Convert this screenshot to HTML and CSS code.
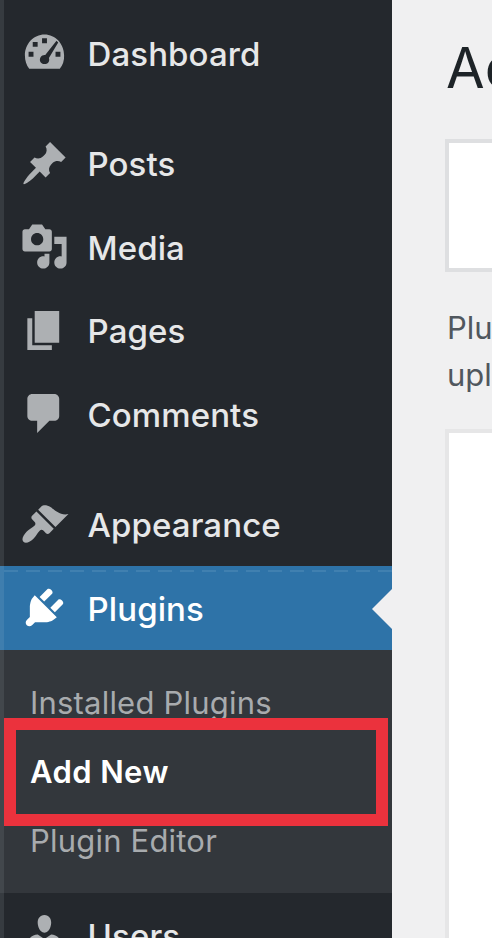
FILE: index.html
```html
<!DOCTYPE html>
<html lang="en">
<head>
<meta charset="utf-8">
<title>Add Plugins</title>
<link rel="stylesheet" href="styles.css">
</head>
<body>
<div class="admin">
  <nav class="sidebar">
    <a class="item"><svg class="icon" viewBox="0 0 20 20"><path fill-rule="evenodd" d="M3.76 16.6h12.48A8 8 0 0 0 18 11.2C18 6.5 14.42 2.7 10 2.7S2 6.5 2 11.2c0 2 .66 4 1.76 5.400zM9 4.200h2v2H9zM5.200 5.700h2v2h-2zM14.900 5.200l.7.7-3.800 6.300c.5 1.500-.5 2.500-1.800 2.500-1.500 0-2.400-1.500-1.600-2.800.4-.7 1.200-1 1.900-.9zM3.500 9.700h2v2h-2zM14.500 9.700h2v2h-2z"/></svg><span class="label">Dashboard</span></a>
    <div class="separator"></div>
    <a class="item"><svg class="icon" viewBox="0 0 20 20"><path d="M10.440 3.020l1.820-1.820 6.360 6.350-1.830 1.820c-1.050-.68-2.480-.57-3.410.36l-.75.75c-.92.93-1.040 2.350-.35 3.410l-1.830 1.820-2.410-2.410-2.800 2.790c-.42.42-3.380 2.710-3.800 2.290s1.860-3.390 2.280-3.810l2.790-2.790L4.100 9.360l1.830-1.820c1.050.69 2.480.57 3.400-.36l.75-.75c.93-.92 1.050-2.350.36-3.410z"/></svg><span class="label">Posts</span></a>
    <a class="item"><svg class="icon" viewBox="0 0 20 20"><path d="M13 11V4c0-.55-.45-1-1-1h-1.670L9 1H5L3.670 3H2c-.55 0-1 .45-1 1v7c0 .55.45 1 1 1h10c.55 0 1-.45 1-1zM7 4.500c1.380 0 2.500 1.120 2.500 2.500S8.380 9.500 7 9.500 4.500 8.380 4.500 7 5.620 4.500 7 4.500zM14 6h5v10.500c0 1.380-1.120 2.500-2.500 2.500S14 17.880 14 16.500s1.120-2.500 2.500-2.500c.17 0 .34.02.5.05V9h-3V6zm-4 8.050V13h2v3.500c0 1.380-1.120 2.500-2.500 2.500S7 17.880 7 16.500 8.120 14 9.500 14c.17 0 .34.02.5.05z"/></svg><span class="label">Media</span></a>
    <a class="item"><svg class="icon" viewBox="0 0 20 20"><path d="M6 15V2h10v13H6zm-1 1h8v2H3V5h2v11z"/></svg><span class="label">Pages</span></a>
    <a class="item"><svg class="icon" viewBox="0 0 20 20"><path d="M5 2h9c1.100 0 2 .9 2 2v7c0 1.100-.9 2-2 2h-2l-5 5v-5H5c-1.100 0-2-.9-2-2V4c0-1.100.9-2 2-2z"/></svg><span class="label">Comments</span></a>
    <div class="separator"></div>
    <a class="item"><svg class="icon" viewBox="0 0 20 20"><path d="M14.480 11.060L7.410 3.990l1.500-1.500c.5-.56 2.300-.47 3.510.32 1.210.8 1.430 1.280 2.910 2.100 1.180.64 2.450 1.260 4.450.85zm-.71.71L6.700 4.700 4.930 6.470c-.39.39-.39 1.020 0 1.410l1.060 1.060c.39.39.39 1.030 0 1.420-.6.6-1.430 1.110-2.210 1.690-.35.26-.7.53-1.010.84C1.430 14.230.4 16.080 1.400 17.070c.99 1 2.840-.03 4.180-1.360.31-.31.58-.66.85-1.020.57-.78 1.080-1.610 1.690-2.210.39-.39 1.020-.39 1.410 0l1.060 1.060c.39.39 1.020.39 1.410 0z"/></svg><span class="label">Appearance</span></a>
    <a class="item current"><svg class="icon" viewBox="0 0 20 20"><path d="M13.110 4.360L9.870 7.600 8 5.730l3.240-3.240c.35-.34 1.050-.2 1.560.32.52.51.66 1.210.31 1.550zm-8 1.770l.91-1.120 9.010 9.010-1.190.84c-.71.71-2.630 1.160-3.820 1.160H6.140L4.900 17.260c-.59.59-1.540.59-2.120 0-.59-.58-.59-1.530 0-2.120l1.240-1.240v-3.880c0-1.130.4-3.190 1.090-3.890zm7.260 3.970l3.240-3.240c.34-.35 1.040-.21 1.550.31.52.51.66 1.210.31 1.550l-3.240 3.250z"/></svg><span class="label">Plugins</span></a>
    <div class="submenu">
      <a class="sub">Installed Plugins</a>
      <a class="sub active">Add New</a>
      <a class="sub">Plugin Editor</a>
    </div>
    <a class="item"><svg class="icon" viewBox="0 0 20 20"><path d="M10 9.250c-2.270 0-2.730-3.440-2.730-3.440C7 4.020 7.820 2 9.970 2c2.160 0 2.980 2.020 2.710 3.810 0 0-.41 3.440-2.680 3.440zm0 2.570L12.720 10c2.390 0 4.520 2.330 4.520 4.530v2.490s-3.650 1.130-7.240 1.130c-3.650 0-7.240-1.130-7.240-1.130v-2.490c0-2.250 1.940-4.480 4.470-4.480z"/></svg><span class="label">Users</span></a>
  </nav>
  <main class="content">
    <h1 class="title">Add Plugins</h1>
    <div class="notice"></div>
    <p class="intro">Plugins<br>upload</p>
    <div class="panel"></div>
  </main>
</div>
</body>
</html>
```
FILE: styles.css
```css
*, *::before, *::after { box-sizing: border-box; }
body {
  margin: 0;
  overflow: hidden;
  background: #f0f0f1;
  font-family: Inter, "Liberation Sans", sans-serif;
}
.admin {
  display: flex;
  width: 492px;
  height: 938px;
  overflow: hidden;
}
.sidebar {
  flex: 0 0 392px;
  padding-top: 11px;
  background: linear-gradient(90deg, #363b40 4px, #24282d 4px);
}
.item {
  display: flex;
  align-items: center;
  height: 83.5px;
  padding-left: 19.5px;
  color: #e6e7e8;
}
.icon {
  flex: 0 0 49px;
  height: 49px;
  margin-right: 19px;
  fill: #adb0b3;
}
.label {
  padding-top: 2px;
  font-size: 33px;
  font-weight: 500;
  line-height: 44px;
  letter-spacing: 0.1px;
  white-space: nowrap;
}
.separator { height: 27px; }
.current {
  position: relative;
  color: #fff;
  background: linear-gradient(90deg, #3f7eae 4px, #2e73a8 4px);
}
.current .icon { fill: #fff; }
.current::before {
  content: "";
  position: absolute;
  top: 4px;
  left: 4px;
  right: 0;
  height: 2px;
  background: repeating-linear-gradient(90deg, #4080b0 0 14px, transparent 14px 22px);
}
.current::after {
  content: "";
  position: absolute;
  top: 23px;
  right: 0;
  border: 20px solid transparent;
  border-left-width: 0;
  border-right-color: #f0f0f1;
}
.submenu {
  height: 243.5px;
  padding: 18px 0 0 30px;
  background: linear-gradient(90deg, #42474c 4px, #33373c 4px);
}
.sub {
  position: relative;
  display: block;
  height: 69px;
  font-size: 31px;
  line-height: 69px;
  letter-spacing: 0.2px;
  color: #a8abae;
  white-space: nowrap;
}
.active {
  font-weight: 600;
  letter-spacing: 0.4px;
  color: #fff;
}
.active::after {
  content: "";
  position: absolute;
  z-index: 1;
  top: -19px;
  left: -26px;
  width: 384px;
  height: 108px;
  border: 12px solid #eb323d;
}
.content {
  flex: 1;
  min-width: 0;
  padding-left: 53px;
  overflow: hidden;
}
.title {
  margin: 36px 0 0 1px;
  font-size: 56px;
  font-weight: 400;
  line-height: 64px;
  color: #1d2327;
  white-space: nowrap;
}
.notice {
  width: 700px;
  height: 133px;
  margin-top: 39px;
  border: 4px solid #dedfe1;
  background: #fff;
}
.intro {
  margin: 32px 0 0 2px;
  font-size: 31px;
  line-height: 47px;
  color: #50575e;
}
.panel {
  width: 700px;
  height: 600px;
  margin-top: 31px;
  border: 4px solid #e6e6e7;
  background: #fff;
}
```
